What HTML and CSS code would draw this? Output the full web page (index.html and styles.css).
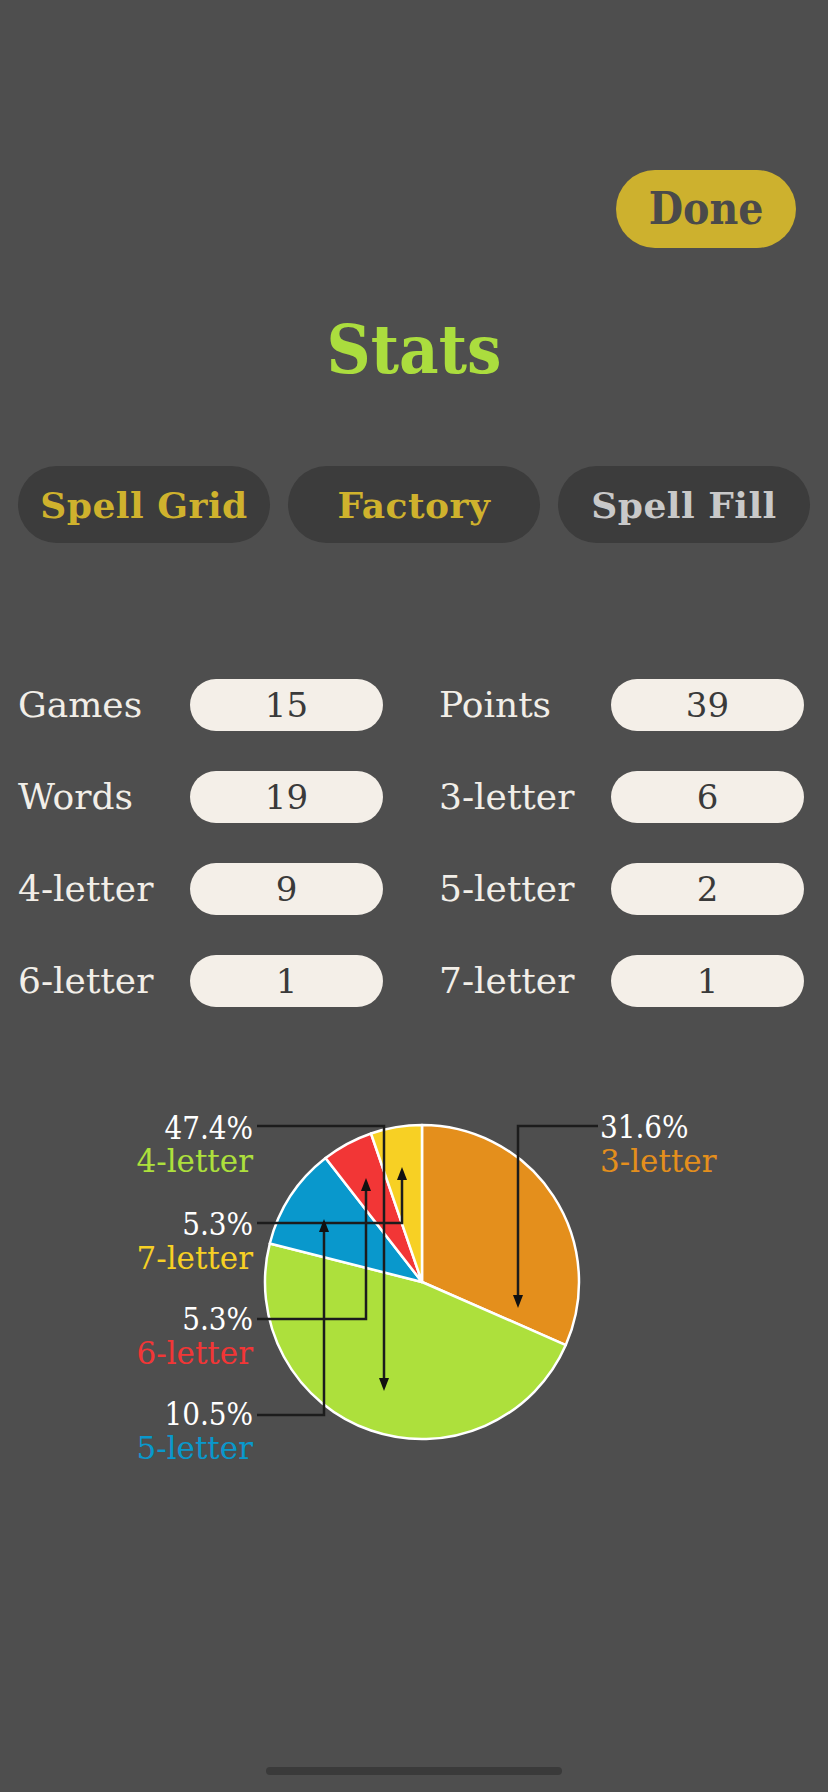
FILE: index.html
```html
<!DOCTYPE html>
<html lang="en">
<head>
<meta charset="utf-8">
<title>Stats</title>
<link rel="stylesheet" href="styles.css">
</head>
<body>
<div class="screen">
  <div class="topbar">
    <button class="done">Done</button>
  </div>
  <h1 class="title">Stats</h1>
  <nav class="tabs">
    <div class="tab tab-gold">Spell Grid</div>
    <div class="tab tab-gold">Factory</div>
    <div class="tab tab-grey">Spell Fill</div>
  </nav>
  <section class="stats">
    <div class="stat"><span class="label">Games</span><span class="pill">15</span></div>
    <div class="stat"><span class="label">Points</span><span class="pill">39</span></div>
    <div class="stat"><span class="label">Words</span><span class="pill">19</span></div>
    <div class="stat"><span class="label">3-letter</span><span class="pill">6</span></div>
    <div class="stat"><span class="label">4-letter</span><span class="pill">9</span></div>
    <div class="stat"><span class="label">5-letter</span><span class="pill">2</span></div>
    <div class="stat"><span class="label">6-letter</span><span class="pill">1</span></div>
    <div class="stat"><span class="label">7-letter</span><span class="pill">1</span></div>
  </section>
  <section class="chart">
    <svg class="pie" width="828" height="400" viewBox="0 0 828 400">
      <g class="slices">
        <path class="s3" d="M422 190 L422 33 A157 157 0 0 1 565.80 253.02 Z"/>
        <path class="s4" d="M422 190 L565.80 253.02 A157 157 0 0 1 269.80 151.46 Z"/>
        <path class="s5" d="M422 190 L269.80 151.46 A157 157 0 0 1 325.57 66.10 Z"/>
        <path class="s6" d="M422 190 L325.57 66.10 A157 157 0 0 1 371.02 41.51 Z"/>
        <path class="s7" d="M422 190 L371.02 41.51 A157 157 0 0 1 422 33 Z"/>
      </g>
      <g class="leaders">
        <polyline points="257,34 384,34 384,286"/>
        <polygon points="379,286 389,286 384,299"/>
        <polyline points="257,131 402,131 402,88"/>
        <polygon points="397,88 407,88 402,75"/>
        <polyline points="257,227 366,227 366,99"/>
        <polygon points="361,99 371,99 366,86"/>
        <polyline points="257,323 324,323 324,140"/>
        <polygon points="319,140 329,140 324,127"/>
        <polyline points="598,34 518,34 518,203"/>
        <polygon points="513,203 523,203 518,216"/>
      </g>
      <g class="labels-left">
        <text class="pct" x="253" y="47">47.4%</text>
        <text class="c4" x="253" y="80">4-letter</text>
        <text class="pct" x="253" y="143">5.3%</text>
        <text class="c7" x="253" y="177">7-letter</text>
        <text class="pct" x="253" y="238">5.3%</text>
        <text class="c6" x="253" y="272">6-letter</text>
        <text class="pct" x="253" y="333">10.5%</text>
        <text class="c5" x="253" y="367">5-letter</text>
      </g>
      <g class="labels-right">
        <text class="pct" x="600" y="46">31.6%</text>
        <text class="c3" x="600" y="80">3-letter</text>
      </g>
    </svg>
  </section>
  <div class="home-indicator"></div>
</div>
</body>
</html>
```

FILE: styles.css
```css
html, body {
  margin: 0;
  padding: 0;
}

body {
  background: #4e4e4e;
  font-family: "DejaVu Serif", "Liberation Serif", serif;
  color: #f2eee8;
}

.screen {
  width: 828px;
  height: 1792px;
  display: flex;
  flex-direction: column;
  overflow: hidden;
}

.topbar {
  display: flex;
  justify-content: flex-end;
  padding: 170px 32px 0 0;
}

.done {
  width: 180px;
  height: 78px;
  border: none;
  border-radius: 39px;
  background: #cdb12e;
  color: #4a4a4a;
  font-family: "DejaVu Serif Condensed", "DejaVu Serif", serif;
  font-weight: bold;
  font-size: 44px;
  line-height: 1;
  padding: 0;
  display: flex;
  align-items: center;
  justify-content: center;
}

.title {
  margin: 67px 0 0;
  text-align: center;
  font-family: "DejaVu Serif Condensed", "DejaVu Serif", serif;
  font-weight: bold;
  font-size: 68px;
  line-height: 68px;
  color: #abdd3e;
}

.tabs {
  display: flex;
  gap: 18px;
  padding: 0 18px;
  margin-top: 83px;
}

.tab {
  flex: 1;
  height: 77px;
  border-radius: 39px;
  background: #3c3c3c;
  display: flex;
  align-items: center;
  justify-content: center;
  font-family: "DejaVu Serif", serif;
  font-weight: bold;
  font-size: 36px;
  letter-spacing: 0.5px;
  line-height: 1;
  white-space: nowrap;
}

.tab-gold {
  color: #cfb22d;
}

.tab-grey {
  color: #c9c9c9;
}

.stats {
  display: grid;
  grid-template-columns: 365px 365px;
  column-gap: 56px;
  row-gap: 40px;
  padding-left: 18px;
  margin-top: 136px;
}

.stat {
  display: grid;
  grid-template-columns: 172px 193px;
  align-items: center;
}

.label {
  font-size: 36px;
  line-height: 1;
  color: #f2eee8;
  white-space: nowrap;
}

.pill {
  height: 52px;
  border-radius: 26px;
  background: #f4efe8;
  color: #3a3a3a;
  display: flex;
  align-items: center;
  justify-content: center;
  font-size: 34px;
  line-height: 1;
}

.chart {
  margin-top: 85px;
  height: 400px;
}

.pie {
  display: block;
}

.slices path {
  stroke: #ffffff;
  stroke-width: 2.5;
  stroke-linejoin: round;
}

.s3 { fill: #e48f1c; }
.s4 { fill: #ade03c; }
.s5 { fill: #0998cc; }
.s6 { fill: #f23636; }
.s7 { fill: #f7d024; }

.leaders polyline {
  fill: none;
  stroke: #1c1c1c;
  stroke-width: 2.5;
}

.leaders polygon {
  fill: #111111;
}

.pie text {
  font-family: "DejaVu Serif", serif;
  font-size: 31px;
}

.pie text.pct {
  font-family: "DejaVu Serif Condensed", "DejaVu Serif", serif;
}

.labels-left text {
  text-anchor: end;
}

.pct { fill: #ffffff; }
.c3 { fill: #e48f1c; }
.c4 { fill: #ade03c; }
.c5 { fill: #0998cc; }
.c6 { fill: #f23636; }
.c7 { fill: #f7d024; }

.home-indicator {
  margin: auto auto 17px;
  width: 296px;
  height: 8px;
  border-radius: 4px;
  background: #3a3a3a;
}
```
